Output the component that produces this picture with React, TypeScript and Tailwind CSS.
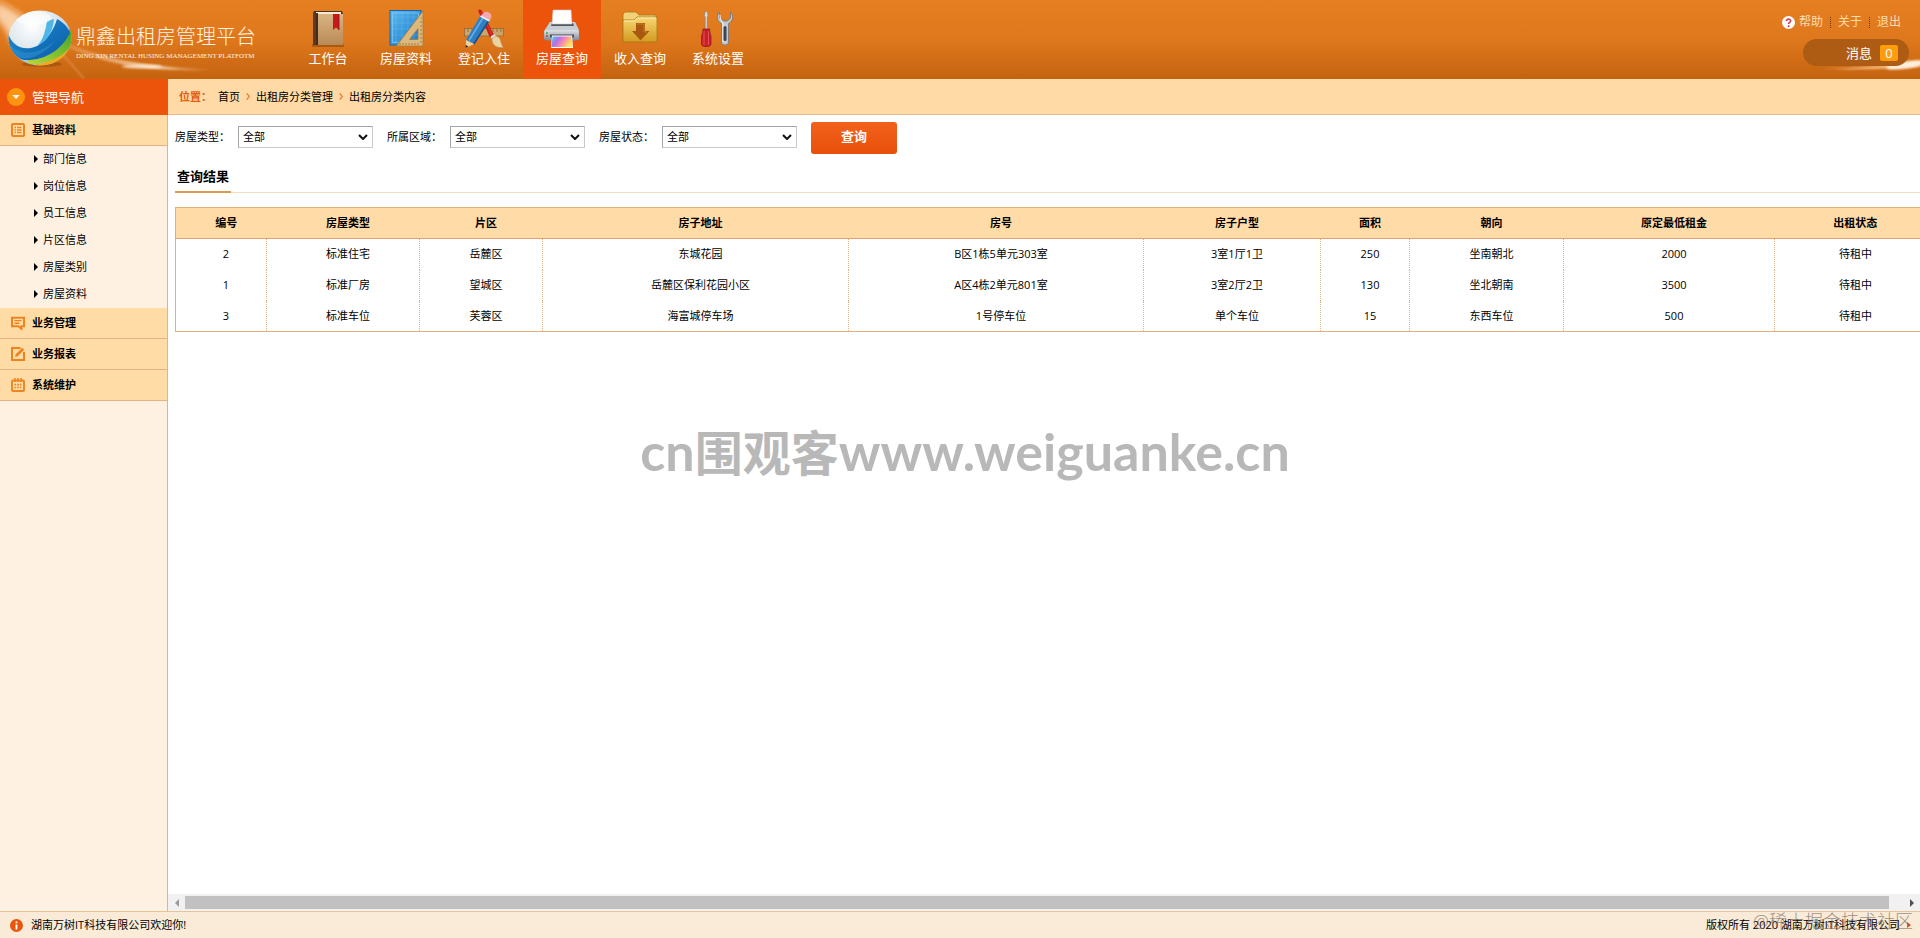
import { useRef } from "react";
import type { ReactNode } from "react";

const BookIcon = () => (
  <svg viewBox="0 0 40 40" className="size-10" aria-hidden="true">
    <defs>
      <linearGradient id="book" x1="0" y1="0" x2="0" y2="1">
        <stop offset="0" stopColor="#d9b483" />
        <stop offset="1" stopColor="#b98a55" />
      </linearGradient>
    </defs>
    <rect x="4" y="35" width="32" height="3" rx="1" fill="#7c3c0a" opacity=".5" />
    <path d="M6 2h28l1 3v31H5V4z" fill="#4a3426" />
    <path d="M8 3h25v3H8z" fill="#f3ead9" />
    <path d="M10 5h25v31H10z" fill="url(#book)" />
    <path d="M5 4h5v32H5z" fill="#5b3a26" />
    <path d="M9 5v31" stroke="#2e1c12" strokeWidth="1" />
    <path d="M25 5h6v16l-3-2.500-3 2.500z" fill="#c5191c" />
    <path d="M31 5v16" stroke="#8c0f12" strokeWidth=".8" />
  </svg>
);

const BlueprintIcon = () => (
  <svg viewBox="0 0 40 40" className="size-10" aria-hidden="true">
    <defs>
      <linearGradient id="bp" x1="0" y1="0" x2="1" y2="1">
        <stop offset="0" stopColor="#5cb8ef" />
        <stop offset="1" stopColor="#1777c9" />
      </linearGradient>
    </defs>
    <rect x="4" y="1.500" width="31" height="34.500" fill="url(#bp)" stroke="#1967a8" />
    <path d="M10 2v34M16 2v34M22 2v34M28 2v34M5 8h30M5 14h30M5 20h30M5 26h30M5 32h30" stroke="#8bd0f7" strokeWidth=".5" opacity=".45" />
    <rect x="6.500" y="4" width="26" height="29.500" fill="none" stroke="#9fdcfb" strokeWidth=".5" />
    <path fillRule="evenodd" d="M37 2v35H10.500zM32 19.500 23.500 30.500H32z" fill="#dcb87c" stroke="#a57a3b" strokeWidth=".8" />
    <path d="M14 36v-2M17 36v-2M20 36v-2M23 36v-2M26 36v-2M29 36v-2M32 36v-2M36 33h-2M36 29h-2M36 25h-2M36 21h-2M36 17h-2M36 13h-2M36 9h-1" stroke="#7a5420" strokeWidth=".6" />
  </svg>
);

const ToolsIcon = () => (
  <svg viewBox="0 0 40 40" className="size-10" aria-hidden="true">
    <rect x="0.500" y="19.500" width="39" height="7.500" fill="#cda56b" stroke="#94692f" strokeWidth=".8" />
    <path d="M4 20v3M8 20v3M12 20v3M16 20v3M25 20v3M29 20v3M33 20v3M37 20v3" stroke="#7c5424" strokeWidth=".7" />
    <path d="M14 1.500c2-2.500 4 0 5 2.500l11 22-4 2.500-9-20z" fill="#c91c14" />
    <path d="M17 3l11 23" stroke="#e8503e" strokeWidth=".7" />
    <path d="M26.500 27.500l4-2.200 2.500 3-4.500 3z" fill="#e8e8e8" />
    <path d="M28 31c0-3 4-5 6.500-3 3 2.500 2 7 5 10.500C34 39.500 28 36.500 28 31z" fill="#ecd2a0" stroke="#b18a4e" strokeWidth=".6" />
    <path d="M16.500 6.500l9 5L10.500 35 2 31z" fill="#2f7fc4" />
    <path d="M19.500 8 5 31.500" stroke="#69aee2" strokeWidth="1.500" />
    <path d="M25 11.500 9.800 35" stroke="#164f86" strokeWidth="1.500" />
    <path d="M17 6.500l3-3c2.500-2 8 .8 7.500 4.200l-2 4z" fill="#f5a7b0" />
    <path d="M16.500 7l9 5" stroke="#eee" strokeWidth="1.800" />
    <path d="M2 31l8 4-8.200 4z" fill="#efd09a" />
    <path d="M1.900 36l2.400 1.400L1.500 39z" fill="#222" />
  </svg>
);

const PrinterIcon = () => (
  <svg viewBox="0 0 40 40" className="size-10" aria-hidden="true">
    <defs>
      <linearGradient id="pr" x1="0" y1="0" x2="0" y2="1">
        <stop offset="0" stopColor="#dfe3e8" />
        <stop offset="1" stopColor="#7f8791" />
      </linearGradient>
      <linearGradient id="rainbow" x1="0" y1="0" x2="1" y2=".4">
        <stop offset="0" stopColor="#49d0f0" />
        <stop offset=".35" stopColor="#a875ea" />
        <stop offset=".6" stopColor="#f57fb8" />
        <stop offset="1" stopColor="#ffe25e" />
      </linearGradient>
    </defs>
    <path d="M8 13h25l4 9v8H2v-8z" fill="#a8afb8" />
    <rect x="2" y="21" width="35" height="10.500" rx="2" fill="url(#pr)" />
    <path d="M8 13h25l4 8H3z" fill="#c8cdd4" />
    <path d="M10 14h21l1 3H9z" fill="#53585f" />
    <path d="M11 1h18l1 14H10z" fill="#fff" stroke="#c7c7c7" strokeWidth=".6" />
    <path d="M8 25.500h24v3H8z" fill="#4d535a" />
    <path d="M10 26.500h20l1 12.500H9z" fill="#fff" />
    <path d="M10.500 27.500h19l1 10.500h-21z" fill="url(#rainbow)" />
    <circle cx="5" cy="24" r="1" fill="#3cb23c" />
    <circle cx="5" cy="27" r="1" fill="#d23a2b" />
  </svg>
);

const FolderIcon = () => (
  <svg viewBox="0 0 40 40" className="size-10" aria-hidden="true">
    <defs>
      <linearGradient id="fo" x1="0" y1="0" x2="0" y2="1">
        <stop offset="0" stopColor="#f7d774" />
        <stop offset="1" stopColor="#d39a1f" />
      </linearGradient>
    </defs>
    <path d="M3 33V5l2-2h11l3 3h17v4" fill="#f2d179" stroke="#a87614" strokeWidth=".8" />
    <path d="M3 11h11l3-3h20v25H3z" fill="url(#fo)" stroke="#a87614" strokeWidth=".8" />
    <path d="M4 12h10.500l3-3H36" fill="none" stroke="#fdf0b4" strokeWidth="1" />
    <path d="M16 14h9v8h4.500l-9 9.500L12 22h4z" fill="#a9590f" />
    <path d="M17 15h7v8h3" fill="none" stroke="#c97a24" strokeWidth="1" />
  </svg>
);

const SettingsIcon = () => (
  <svg viewBox="0 0 40 40" className="size-10" aria-hidden="true">
    <path d="M7.200 2.500h2l.8 4-.8 1.500V20h-2V8l-.8-1.500z" fill="#d8dde2" stroke="#777f87" strokeWidth=".6" />
    <path d="M5 20h6.500l.5 4 1 3v8c0 2-2 2.500-4.700 2.500S3.500 37 3.500 35v-8l1-3z" fill="#cb1f28" stroke="#7d1117" strokeWidth=".6" />
    <path d="M6 22v14M10.500 22v14" stroke="#e8555b" strokeWidth=".9" />
    <path d="M21 3c-3 4-2 9 2.500 11.500V33c0 4 7 4 7 0V14.500C35 12 36 7 32.500 3v6l-3 3h-4L21.500 9z" fill="#c3cad1" stroke="#6d757d" strokeWidth=".8" />
    <path d="M22 6c0 4 1.500 6 3 8v19" fill="none" stroke="#f3f5f7" strokeWidth="1" />
    <rect x="25.500" y="17" width="3" height="15" rx="1.500" fill="#3f464d" />
  </svg>
);

const Globe = () => (
  <svg viewBox="0 0 72 64" className="h-16 w-[72px]" aria-hidden="true">
    <defs>
      <radialGradient id="glass" cx=".45" cy=".3" r=".75">
        <stop offset="0" stopColor="#ffffff" />
        <stop offset=".5" stopColor="#dbe6ec" />
        <stop offset="1" stopColor="#7fa3b6" />
      </radialGradient>
      <linearGradient id="sea" x1="0" y1="0" x2="1" y2="1">
        <stop offset="0" stopColor="#1d8fd3" />
        <stop offset="1" stopColor="#0b5ba6" />
      </linearGradient>
      <linearGradient id="leaf" x1="0" y1="1" x2="1" y2="0">
        <stop offset="0" stopColor="#b9d733" />
        <stop offset="1" stopColor="#3fa32a" />
      </linearGradient>
      <clipPath id="ball">
        <ellipse cx="40" cy="31" rx="31.500" ry="27.500" />
      </clipPath>
    </defs>
    <ellipse cx="42" cy="57" rx="20" ry="3" fill="#7b3c08" opacity=".4" />
    <g clipPath="url(#ball)">
      <rect width="72" height="64" fill="url(#glass)" />
      <path d="M36 57C50 56 66 48 74 34v30H30z" fill="#f2a818" />
      <path d="M26 52c18 2 36-8 44-31l4 12C68 47 52 57 30 57z" fill="url(#leaf)" />
      <path d="M8 25c3 14 16 20 29 14C47 33 54 23 57 12c6 3 12 9 13 14C62 42 46 54 24 53 8 48 5 32 8 25z" fill="url(#sea)" />
      <path d="M38 38c5-6 7-12 9-24l7-2c-1 12-6 22-16 26z" fill="#4fb6e8" />
      <path d="M10 37c8 12 28 12 46-4-14 18-34 24-44 12z" fill="#57b7ea" opacity=".25" />
      <ellipse cx="33" cy="11" rx="18" ry="7" fill="#fff" opacity=".6" />
    </g>
  </svg>
);

const LeftFlare = () => (
  <svg viewBox="0 0 290 79" className="absolute left-0 top-0 h-[79px] w-[290px]" aria-hidden="true">
    <defs>
      <filter id="soft" x="-20%" y="-20%" width="140%" height="140%">
        <feGaussianBlur stdDeviation="3" />
      </filter>
      <filter id="soft1" x="-20%" y="-60%" width="140%" height="220%">
        <feGaussianBlur stdDeviation="1.200" />
      </filter>
      <linearGradient id="streak" x1="0" y1="0" x2="1" y2="0">
        <stop offset="0" stopColor="#ffd7a8" stopOpacity=".2" />
        <stop offset=".6" stopColor="#ffe9cf" />
        <stop offset="1" stopColor="#ffcf9a" stopOpacity="0" />
      </linearGradient>
    </defs>
    <path d="M-4 2C12 8 26 18 40 32L12 44C8 30 0 24-4 18z" fill="#ffe4c6" opacity=".8" filter="url(#soft)" />
    <path d="M60 40C100 58 140 67 220 70 160 72 110 68 60 44z" fill="url(#streak)" opacity=".8" filter="url(#soft1)" />
    <path d="M0 1C20 6 60 50 84 79" fill="none" stroke="#f3b27a" strokeWidth="1.500" opacity=".5" filter="url(#soft1)" />
    <ellipse cx="142" cy="66.500" rx="20" ry="2" fill="#ffe9d0" opacity=".8" filter="url(#soft1)" />
  </svg>
);

const RightFlare = () => (
  <svg viewBox="0 0 110 30" className="absolute bottom-0 right-0 h-[30px] w-[110px]" aria-hidden="true">
    <path d="M10 20C50 19 80 16 110 11v7C80 20 50 21 10 20z" fill="#ffc68d" opacity=".8" filter="url(#soft1)" />
    <ellipse cx="96" cy="16" rx="20" ry="3.500" fill="#fff3e2" opacity=".95" filter="url(#soft1)" transform="rotate(-8 96 16)" />
  </svg>
);

const svgBox = "size-[14px] shrink-0 text-[#ee8420]";
const ListIcon = () => (
  <svg viewBox="0 0 14 14" className={svgBox} fill="none" stroke="currentColor" aria-hidden="true">
    <rect x="1" y="1" width="12" height="12" rx="1" strokeWidth="2" />
    <path d="M3.500 4.500H5M6 4.500h4.500M3.500 7H5M6 7h4.500M3.500 9.500H5M6 9.500h4.500" strokeWidth="1.400" />
  </svg>
);
const ChatIcon = () => (
  <svg viewBox="0 0 14 14" className={svgBox} fill="none" stroke="currentColor" aria-hidden="true">
    <path d="M1 1.800h12v8.400h-2.500V13L7.500 10.200H1z" strokeWidth="2" />
    <path d="M3.500 4.600h7M3.500 7.200h5" strokeWidth="1.400" />
  </svg>
);
const EditIcon = () => (
  <svg viewBox="0 0 14 14" className={svgBox} fill="none" stroke="currentColor" aria-hidden="true">
    <path d="M9.500 1H1v12h12V5" strokeWidth="2" />
    <path d="M4 10l.8-2.800 6.400-6.400 2 2-6.400 6.400z" fill="currentColor" stroke="none" />
  </svg>
);
const CalendarIcon = () => (
  <svg viewBox="0 0 14 14" className={svgBox} fill="none" stroke="currentColor" aria-hidden="true">
    <rect x="1" y="2.500" width="12" height="10.500" rx="1" strokeWidth="1.900" />
    <path d="M4 0v4M7 0v4M10 0v4" strokeWidth="1.500" />
    <path d="M3.500 6.700h7M3.500 9.500h7" strokeWidth="1.700" strokeDasharray="1.700 1" />
  </svg>
);

const topMenu: { label: string; icon: ReactNode; active?: boolean }[] = [
  { label: "工作台", icon: <BookIcon /> },
  { label: "房屋资料", icon: <BlueprintIcon /> },
  { label: "登记入住", icon: <ToolsIcon /> },
  { label: "房屋查询", icon: <PrinterIcon />, active: true },
  { label: "收入查询", icon: <FolderIcon /> },
  { label: "系统设置", icon: <SettingsIcon /> },
];

const sideGroups: { label: string; icon: ReactNode; items: string[] }[] = [
  { label: "基础资料", icon: <ListIcon />, items: ["部门信息", "岗位信息", "员工信息", "片区信息", "房屋类别", "房屋资料"] },
  { label: "业务管理", icon: <ChatIcon />, items: [] },
  { label: "业务报表", icon: <EditIcon />, items: [] },
  { label: "系统维护", icon: <CalendarIcon />, items: [] },
];

const filters = [
  { id: "type", label: "房屋类型：" },
  { id: "area", label: "所属区域：" },
  { id: "state", label: "房屋状态：" },
];

const columns = ["编号", "房屋类型", "片区", "房子地址", "房号", "房子户型", "面积", "朝向", "原定最低租金", "出租状态"];

const rows = [
  ["2", "标准住宅", "岳麓区", "东城花园", "B区1栋5单元303室", "3室1厅1卫", "250", "坐南朝北", "2000", "待租中"],
  ["1", "标准厂房", "望城区", "岳麓区保利花园小区", "A区4栋2单元801室", "3室2厅2卫", "130", "坐北朝南", "3500", "待租中"],
  ["3", "标准车位", "芙蓉区", "海富城停车场", "1号停车位", "单个车位", "15", "东西车位", "500", "待租中"],
];

function Header() {
  return (
    <header className="relative flex h-[79px] shrink-0 bg-linear-to-b from-[#e57f20] via-[#df781d] to-[#c4630f] text-white">
      <LeftFlare />
      <RightFlare />
      <a href="#home" className="relative flex w-[289px] shrink-0 items-start pt-[7px]">
        <Globe />
        <span className="ml-1 flex flex-col pt-[17px] text-[#fff3e2]">
          <span className="whitespace-nowrap text-[20px] font-light leading-[26px]">鼎鑫出租房管理平台</span>
          <span className="whitespace-nowrap font-['Liberation_Serif',serif] text-[7px] leading-3">DING XIN RENTAL HUSING MANAGEMENT PLATFOTM</span>
        </span>
      </a>
      <nav className="relative flex">
        {topMenu.map((m) => (
          <a
            key={m.label}
            href="#menu"
            className={`flex w-[78px] flex-col items-center pt-[9px] text-[13px] leading-[18px] ${m.active ? "bg-[#ec540c]" : ""}`}
          >
            {m.icon}
            {m.label}
          </a>
        ))}
      </nav>
      <div className="relative ml-auto flex flex-col items-end pr-[11px]">
        <div className="mt-3 flex h-5 items-center pr-2 text-[12px] leading-5 text-[#fddcae]">
          <svg viewBox="0 0 14 14" className="mr-1 size-[13px]" aria-hidden="true">
            <circle cx="7" cy="7" r="7" fill="#fff" />
            <path d="M4.800 5.500C4.800 2.500 9.400 2.700 9.300 5.400 9.200 7 7.100 7 7.100 8.700" fill="none" stroke="#d8394a" strokeWidth="1.700" />
            <circle cx="7.100" cy="11" r="1.100" fill="#d8394a" />
          </svg>
          <a href="#help">帮助</a>
          <span className="mx-[7px] h-[11px] border-l border-dotted border-[#6e3205]" />
          <a href="#about">关于</a>
          <span className="mx-[7px] h-[11px] border-l border-dotted border-[#6e3205]" />
          <a href="#exit">退出</a>
        </div>
        <a href="#messages" className="mt-[7px] flex h-[27px] w-[106px] items-center justify-end gap-2 rounded-full bg-[#ae5c14] pr-[11px] text-[13px]">
          消息
          <span className="h-4 w-[18px] rounded-xs bg-[#ff9c0c] text-center leading-4">0</span>
        </a>
      </div>
    </header>
  );
}

function Sidebar() {
  return (
    <aside className="flex w-42 shrink-0 flex-col border-r border-[#e6b283] bg-[#fff1e2]">
      <div className="-mr-px flex h-9 items-center gap-[7px] bg-[#ec540c] pl-[7px] text-[13px] text-white">
        <svg viewBox="0 0 18 18" className="size-[18px]" aria-hidden="true">
          <circle cx="9" cy="9" r="9" fill="#ff9412" />
          <path d="M5.500 7h7L9 11z" fill="#fff" />
        </svg>
        管理导航
      </div>
      {sideGroups.map((g) => (
        <div key={g.label}>
          <button type="button" className="flex h-[31px] w-full items-center gap-[7px] border-b border-[#e6b283] bg-[#ffdba6] pl-[11px] font-bold">
            {g.icon}
            {g.label}
          </button>
          {g.items.length > 0 && (
            <ul>
              {g.items.map((i) => (
                <li key={i}>
                  <a href="#item" className="flex h-[27px] items-center gap-[5px] pb-0.5 pl-[34px]">
                    <svg viewBox="0 0 4 8" className="h-2 w-1" aria-hidden="true">
                      <path d="M0 0l4 4-4 4z" />
                    </svg>
                    {i}
                  </a>
                </li>
              ))}
            </ul>
          )}
        </div>
      ))}
    </aside>
  );
}

const Chevron = () => (
  <svg viewBox="0 0 4 8" className="h-[7px] w-1" fill="none" stroke="#ec6a1c" strokeWidth="1.300" aria-hidden="true">
    <path d="M.5.500 3.500 4 .5 7.500" />
  </svg>
);

export default function App() {
  const pane = useRef<HTMLDivElement>(null);
  const scroll = (left: number) => pane.current?.scrollBy({ left });

  return (
    <div className="relative flex h-screen flex-col overflow-hidden bg-white font-['Open_Sans','Noto_Sans_CJK_SC',sans-serif] text-[11px] leading-4 text-black">
      <Header />
      <div className="flex min-h-0 flex-1">
        <Sidebar />
        <main className="flex min-w-0 flex-1 flex-col">
          <nav className="flex h-9 shrink-0 items-center gap-1.5 border-b border-[#e9bb8d] bg-[#ffdaa7] pl-[11px]">
            <span className="font-bold text-[#e25a10]">位置：</span>
            <a href="#home">首页</a>
            <Chevron />
            <a href="#manage">出租房分类管理</a>
            <Chevron />
            <a href="#content">出租房分类内容</a>
          </nav>
          <div ref={pane} className="min-h-0 flex-1 overflow-hidden pl-[7px]">
            <form className="flex h-[46px] items-start pt-[7px]" onSubmit={(e) => e.preventDefault()}>
              {filters.map((f) => (
                <div key={f.id} className="mr-3.5 flex h-[30px] items-center">
                  <label htmlFor={f.id} className="w-[63px]">{f.label}</label>
                  <div className="relative">
                    <select id={f.id} className="h-[22px] w-[135px] appearance-none border border-[#c5c8cc] border-l-[#a0a5aa] border-t-[#a0a5aa] bg-white pl-1">
                      <option>全部</option>
                    </select>
                    <svg viewBox="0 0 10 6" className="pointer-events-none absolute right-[5px] top-2 h-1.5 w-2.5" fill="none" stroke="#111" strokeWidth="2" aria-hidden="true">
                      <path d="M1 1l4 4 4-4" />
                    </svg>
                  </div>
                </div>
              ))}
              <button type="submit" className="h-8 w-[86px] rounded-[3px] bg-linear-to-b from-[#f2621c] to-[#e84f08] pb-1 text-[13px] font-bold text-white">
                查询
              </button>
            </form>
            <div className="flex h-8 border-b border-[#f6dcc0]">
              <h2 className="-mb-px h-8 border-b-2 border-[#d99a50] px-0.5 pt-[7px] text-[13px] font-bold">查询结果</h2>
            </div>
            <table className="mt-3.5 w-full min-w-[1751px] table-fixed border-collapse border border-[#e2b07c] text-center">
              <colgroup>
                <col className="w-[91px]" />
                <col className="w-[153px]" />
                <col className="w-[123px]" />
                <col className="w-[306px]" />
                <col className="w-[295px]" />
                <col className="w-[177px]" />
                <col className="w-[89px]" />
                <col className="w-[154px]" />
                <col className="w-[211px]" />
                <col className="w-[152px]" />
              </colgroup>
              <thead>
                <tr className="h-[31px] border-b border-[#dda06e] bg-[#ffdba8]">
                  {columns.map((c) => (
                    <th key={c} className="pl-2.5 font-bold">{c}</th>
                  ))}
                </tr>
              </thead>
              <tbody>
                {rows.map((r) => (
                  <tr key={r[0]} className="h-[31px]">
                    {r.map((v, i) => (
                      <td key={columns[i]} className="border-r border-dotted border-[#dcb78a] pl-2.5">{v}</td>
                    ))}
                  </tr>
                ))}
              </tbody>
            </table>
          </div>
          <div className="flex h-[17px] shrink-0 items-center bg-[#f1f1f1]">
            <button type="button" aria-label="向左滚动" className="flex h-full w-[17px] items-center justify-center" onClick={() => scroll(-40)}>
              <svg viewBox="0 0 4 8" className="h-2 w-1" aria-hidden="true"><path d="M4 0v8L0 4z" fill="#9a9a9a" /></svg>
            </button>
            <div className="mr-3.5 h-[13px] flex-1 bg-[#c1c1c1]" />
            <button type="button" aria-label="向右滚动" className="flex h-full w-[17px] items-center justify-center" onClick={() => scroll(40)}>
              <svg viewBox="0 0 4 8" className="h-2 w-1" aria-hidden="true"><path d="M0 0l4 4-4 4z" fill="#505050" /></svg>
            </button>
          </div>
        </main>
      </div>
      <footer className="flex h-[27px] shrink-0 items-center border-t border-[#e9c398] bg-[#f9ebd8] pl-2.5 pr-[9px]">
        <svg viewBox="0 0 14 14" className="mr-2 size-[13px]" aria-hidden="true">
          <circle cx="7" cy="7" r="7" fill="#e8560e" />
          <path d="M7 5.800v5.400M7 2.600v2" stroke="#fff" strokeWidth="2" />
        </svg>
        湖南万树IT科技有限公司欢迎你!
        <span className="ml-auto">版权所有 2020 湖南万树IT科技有限公司</span>
        <svg viewBox="0 0 4 6" className="ml-[7px] h-1.5 w-1" aria-hidden="true"><path d="M0 0l4 3-4 3z" fill="#e8560e" /></svg>
      </footer>
      <div className="pointer-events-none absolute inset-x-0 top-[418px] flex items-baseline justify-center whitespace-nowrap pl-[10px] font-['Lato','Noto_Sans_CJK_SC',sans-serif] text-[52px] font-bold leading-[66px] text-[#b8b8b8]">
        <span>cn</span>
        <span className="text-[48px]">围观客</span>
        <span>www.weiguanke.cn</span>
      </div>
      <div className="pointer-events-none absolute bottom-1.5 right-[7px] whitespace-nowrap text-[18px] leading-[22px] font-light text-[#6f665e]/70">@稀土掘金技术社区</div>
    </div>
  );
}
